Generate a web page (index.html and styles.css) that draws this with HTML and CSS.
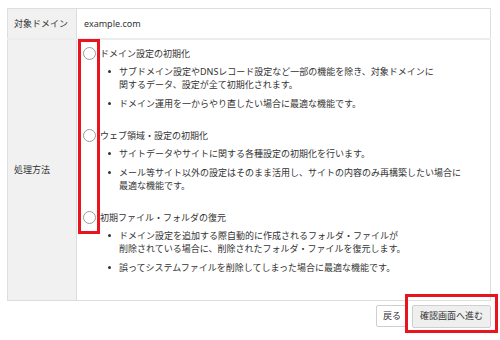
FILE: index.html
```html
<!DOCTYPE html>
<html lang="ja">
<head>
<meta charset="utf-8">
<link rel="stylesheet" href="styles.css">
</head>
<body>
<div class="page">
  <table class="form">
    <tr class="row-domain">
      <th>対象ドメイン</th>
      <td class="domain">example.com</td>
    </tr>
    <tr class="row-method">
      <th>処理方法</th>
      <td class="methods">
        <div class="option">
          <label class="opt-title"><span class="radio"></span>ドメイン設定の初期化</label>
          <ul>
            <li>サブドメイン設定やDNSレコード設定など一部の機能を除き、対象ドメインに<br>関するデータ、設定が全て初期化されます。</li>
            <li>ドメイン運用を一からやり直したい場合に最適な機能です。</li>
          </ul>
        </div>
        <div class="option">
          <label class="opt-title"><span class="radio"></span>ウェブ領域・設定の初期化</label>
          <ul>
            <li>サイトデータやサイトに関する各種設定の初期化を行います。</li>
            <li>メール等サイト以外の設定はそのまま活用し、サイトの内容のみ再構築したい場合に<br>最適な機能です。</li>
          </ul>
        </div>
        <div class="option">
          <label class="opt-title"><span class="radio"></span>初期ファイル・フォルダの復元</label>
          <ul>
            <li>ドメイン設定を追加する際自動的に作成されるフォルダ・ファイルが<br>削除されている場合に、削除されたフォルダ・ファイルを復元します。</li>
            <li>誤ってシステムファイルを削除してしまった場合に最適な機能です。</li>
          </ul>
        </div>
      </td>
    </tr>
  </table>
  <div class="actions">
    <button class="btn">戻る</button>
    <button class="btn btn-primary">確認画面へ進む</button>
  </div>
  <div class="mark mark-radios"></div>
  <div class="mark mark-next"></div>
</div>
</body>
</html>
```

FILE: styles.css
```css
* { box-sizing: border-box; }
html, body {
  margin: 0;
  padding: 0;
  background: #fff;
}
body {
  font-family: "Noto Sans", "Noto Sans CJK JP", sans-serif;
  font-size: 9px;
  color: #333;
}
.page {
  position: relative;
  width: 500px;
  height: 340px;
  padding: 8px 9px 0 7px;
}
.form {
  width: 484px;
  border-collapse: collapse;
  border: 1px solid #dedede;
}
.form th {
  width: 69px;
  background: #f1f1f1;
  font-weight: normal;
  text-align: left;
  padding: 0 6px;
  border-right: 1px solid #dcdcdc;
  vertical-align: middle;
  line-height: 13px;
}
.row-domain th,
.row-domain td {
  height: 30px;
  border-bottom: 2px solid #ededed;
}
.domain {
  padding: 0 7px;
  line-height: 13px;
  vertical-align: middle;
}
.methods {
  padding: 7px 6px 7px 6px;
  vertical-align: top;
}
.opt-title {
  display: flex;
  align-items: center;
  gap: 4px;
  height: 13px;
  line-height: 13px;
}
.radio {
  width: 13px;
  height: 13px;
  border: 1px solid #9a9a9a;
  border-radius: 50%;
  background: #fff;
  flex: none;
}
.option ul {
  list-style: none;
  margin: 5px 0 19px 25px;
  padding: 0;
}
.option li {
  display: grid;
  grid-template-columns: 11px auto;
  line-height: 13px;
  white-space: nowrap;
}
.option li::before {
  content: "";
  width: 3px;
  height: 3px;
  border-radius: 50%;
  background: #333;
  margin-top: 5px;
}
.option li + li {
  margin-top: 6px;
}
.actions {
  width: 484px;
  display: flex;
  justify-content: flex-end;
  gap: 4px;
  margin-top: 4px;
}
.btn {
  font-family: "Noto Sans", "Noto Sans CJK JP", sans-serif;
  font-size: 9px;
  color: #333;
  height: 22px;
  padding: 0 6px;
  background: #fff;
  border: 1px solid #cfcfcf;
  border-radius: 2px;
  line-height: 20px;
}
.btn-primary {
  height: 23px;
  padding: 0 7px;
  background: #efefef;
}
.mark {
  position: absolute;
  border: 3px solid #e8141e;
}
.mark-radios {
  left: 78px;
  top: 39px;
  width: 22px;
  height: 195px;
}
.mark-next {
  left: 405px;
  top: 294px;
  width: 93px;
  height: 39px;
}
```
